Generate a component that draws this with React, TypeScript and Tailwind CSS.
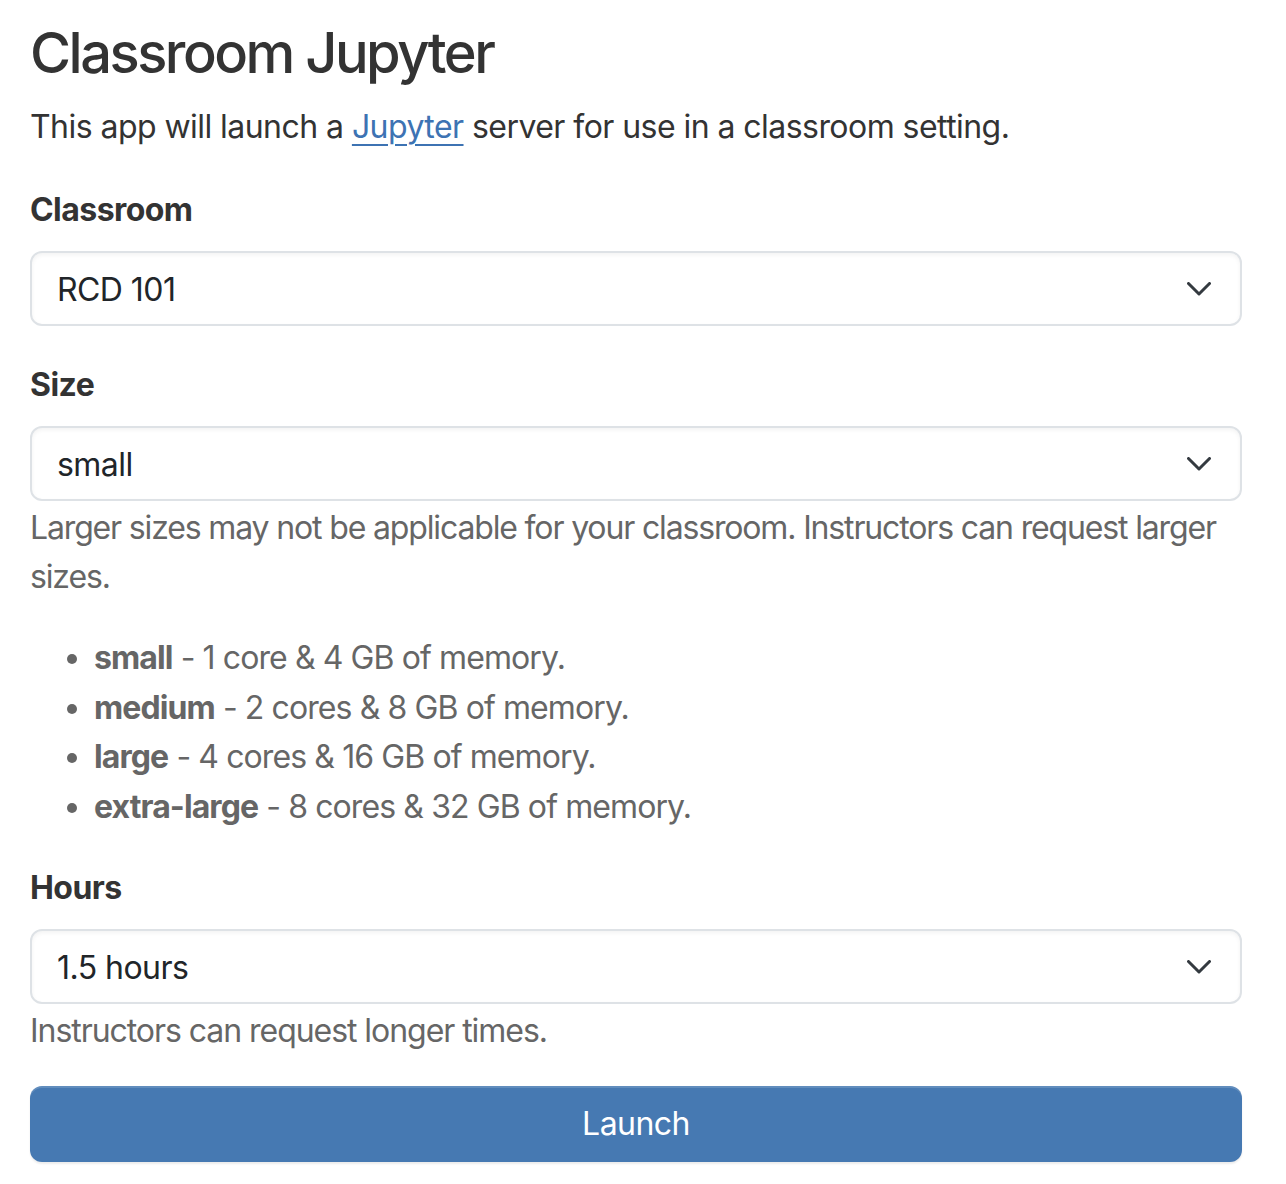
import React from "react";

function Chevron() {
  return (
    <svg width="24" height="14" viewBox="0 0 24 14" className="shrink-0" aria-hidden="true">
      <path d="M1.5 1.5 L12 12 L22.5 1.5" fill="none" stroke="#343a40" strokeWidth="3" strokeLinecap="round" strokeLinejoin="round" />
    </svg>
  );
}

function Select({ value }: { value: string }) {
  return (
    <div className="h-[75px] w-full rounded-[12px] border-2 border-[#dee2e6] bg-white shadow-[inset_0_2px_4px_rgba(0,0,0,0.05)] flex items-center justify-between pl-[25px] pr-[29px] text-[32px] tracking-[-0.55px] text-[#212529]">
      <span className="pt-[2px]">{value}</span>
      <Chevron />
    </div>
  );
}

export default function App() {
  const font = { fontFamily: "Inter, 'Noto Sans', 'Liberation Sans', sans-serif" };
  return (
    <div style={font} className="bg-white min-h-[1184px] pl-[30px] pr-[44px] pt-[20px] text-[#333333] tracking-[-0.55px]">
      <h1 className="text-[56px] leading-[67px] font-medium mb-[15px] tracking-[-2.5px]">Classroom Jupyter</h1>
      <p className="text-[32px] leading-[49px] mb-[34px]">
        This app will launch a{" "}
        <a href="#" className="text-[#3d73b3] underline decoration-2 underline-offset-[6px]">Jupyter</a>{" "}
        server for use in a classroom setting.
      </p>

      <div className="mb-[34px]">
        <label className="block text-[32px] leading-[49px] font-bold mb-[17px]">Classroom</label>
        <Select value="RCD 101" />
      </div>

      <div className="mb-[32px]">
        <label className="block text-[32px] leading-[49px] font-bold mb-[17px]">Size</label>
        <Select value="small" />
        <div className="text-[32px] leading-[49px] text-[#666666] mt-[2px]">
          <p className="mb-[32px] tracking-[-1.15px]">Larger sizes may not be applicable for your classroom. Instructors can request larger sizes.</p>
          <ul className="list-disc pl-[64px] leading-[49.5px] tracking-[-0.9px]">
            <li><strong className="font-bold">small</strong> - 1 core &amp; 4 GB of memory.</li>
            <li><strong className="font-bold">medium</strong> - 2 cores &amp; 8 GB of memory.</li>
            <li><strong className="font-bold">large</strong> - 4 cores &amp; 16 GB of memory.</li>
            <li><strong className="font-bold">extra-large</strong> - 8 cores &amp; 32 GB of memory.</li>
          </ul>
        </div>
      </div>

      <div className="mb-[31px]">
        <label className="block text-[32px] leading-[49px] font-bold mb-[17px]">Hours</label>
        <Select value="1.5 hours" />
        <p className="text-[32px] leading-[49px] text-[#666666] mt-[2px] tracking-[-1.05px]">Instructors can request longer times.</p>
      </div>

      <button className="w-full h-[76px] rounded-[12px] bg-[#4679b2] text-white text-[32px] shadow-[inset_0_2px_0_rgba(255,255,255,0.15),0_2px_2px_rgba(0,0,0,0.075)]">
        Launch
      </button>
    </div>
  );
}
